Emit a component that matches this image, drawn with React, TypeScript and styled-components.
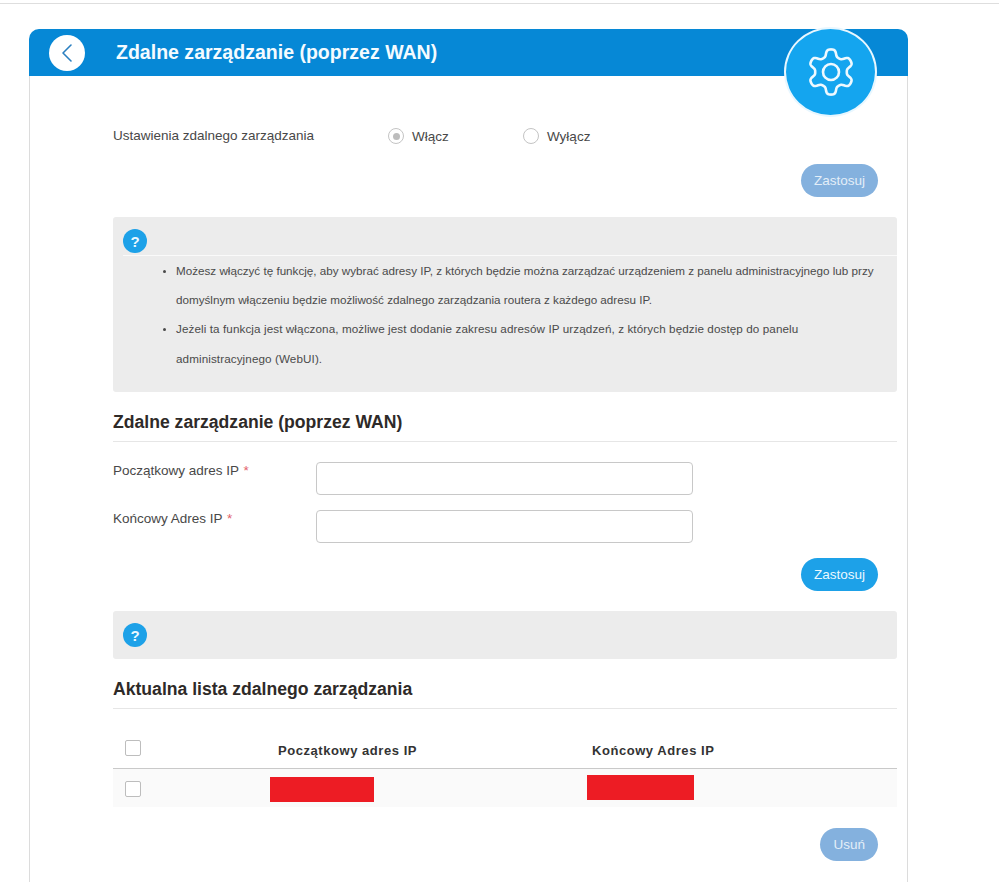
import React from "react";
import styled, { createGlobalStyle } from "styled-components";
import { ChevronLeft } from "lucide-react";

const GlobalStyle = createGlobalStyle`
  html, body {
    margin: 0;
    height: 882px;
    overflow: hidden;
    background: #fff;
    font-family: "Liberation Sans", Arial, sans-serif;
    color: #484848;
  }
`;

const TopLine = styled.div`
  height: 3px;
  border-bottom: 1px solid #dedede;
  margin-bottom: 25px;
`;

const Card = styled.div`
  position: relative;
  width: 879px;
  margin-left: 29px;
`;

const Header = styled.div`
  display: flex;
  align-items: center;
  height: 47px;
  padding-left: 20px;
  background: #0688d6;
  border-radius: 10px 10px 0 0;
`;

const BackButton = styled.div`
  display: flex;
  align-items: center;
  justify-content: center;
  width: 36px;
  height: 36px;
  margin-right: 31px;
  border-radius: 50%;
  background: #fff;
  color: #2a7fc0;
`;

const HeaderTitle = styled.h1`
  margin: 0;
  font-size: 19.55px;
  font-weight: 700;
  color: #f4fbff;
`;

const GearBadge = styled.div`
  position: absolute;
  top: -2px;
  right: 31px;
  display: flex;
  align-items: center;
  justify-content: center;
  width: 89px;
  height: 86px;
  border: 2px solid #e8f7ff;
  border-radius: 50%;
  background: #14a5ef;
  color: #eef9ff;
`;

const Body = styled.div`
  height: 810px;
  padding: 0 10px 0 83px;
  border-left: 1px solid #dcdcdc;
  border-right: 1px solid #dcdcdc;
`;

const ModeRow = styled.div`
  display: flex;
  align-items: center;
  height: 20px;
  padding-top: 50px;
  font-size: 13.5px;
`;

const ModeLabel = styled.span`
  width: 275px;
  margin-top: -2px;
`;

const RadioOption = styled.label`
  display: flex;
  align-items: center;
  gap: 8px;
  width: 135px;
  font-size: 13.5px;
`;

const Radio = styled.span<{ $checked?: boolean }>`
  display: flex;
  align-items: center;
  justify-content: center;
  width: 14px;
  height: 14px;
  border: 1px solid #c4c4c4;
  border-radius: 50%;
  background: #fff;

  &::after {
    content: "";
    display: ${(p) => (p.$checked ? "block" : "none")};
    width: 7px;
    height: 7px;
    border-radius: 50%;
    background: #bdbdbd;
  }
`;

const ButtonRow = styled.div<{ $top: number }>`
  display: flex;
  justify-content: flex-end;
  padding-top: ${(p) => p.$top}px;
  padding-right: 19px;
`;

const PillButton = styled.button<{ $disabled?: boolean }>`
  height: 33px;
  padding: 0 13px;
  border: none;
  border-radius: 17px;
  background: ${(p) => (p.$disabled ? "#84b1de" : "#1da1e8")};
  color: ${(p) => (p.$disabled ? "#e3eef8" : "#eaf8ff")};
  font-family: inherit;
  font-size: 13.5px;
`;

const InfoBox = styled.div<{ $top: number; $height: number }>`
  height: ${(p) => p.$height}px;
  margin-top: ${(p) => p.$top}px;
  padding: 12px 0 0 10px;
  box-sizing: border-box;
  background: #ececec;
  border-radius: 3px;
`;

const HelpIcon = styled.div`
  display: flex;
  align-items: center;
  justify-content: center;
  width: 24px;
  height: 24px;
  border-radius: 50%;
  background: #1da1e8;
  color: #eaf8ff;
  font-size: 15px;
  font-weight: 700;
`;

const InfoDivider = styled.div`
  height: 1px;
  margin: 2px 0 0 0;
  background: #fafafa;
`;

const InfoList = styled.ul`
  margin: -0.5px 0 0;
  padding: 0 20px 0 53px;
  font-size: 11.67px;
  line-height: 29.4px;
  color: #4a4a4a;

  li::marker {
    font-size: 10px;
  }
`;

const InfoItem = styled.li<{ $tracking?: number }>`
  letter-spacing: ${(p) => p.$tracking ?? 0}px;
`;

const SectionTitle = styled.h2<{ $top: number }>`
  margin: ${(p) => p.$top}px 0 0;
  padding-bottom: 9px;
  border-bottom: 1px solid #e6e6e6;
  font-size: 17.6px;
  line-height: 20px;
  font-weight: 700;
  color: #2e2a28;
`;

const FormRow = styled.div<{ $top: number }>`
  display: flex;
  margin-top: ${(p) => p.$top}px;
`;

const FieldLabel = styled.label`
  width: 203px;
  font-size: 13.5px;
  line-height: 18px;
`;

const Required = styled.span`
  margin-left: 1px;
  color: #e2606a;
`;

const TextInput = styled.input`
  width: 377px;
  height: 33px;
  box-sizing: border-box;
  border: 1px solid #c8c8c8;
  border-radius: 4px;
  background: #fff;
`;

const TableGrid = styled.div<{ $head?: boolean }>`
  display: grid;
  grid-template-columns: 157px 317px 1fr;
  height: ${(p) => (p.$head ? "59px" : "38px")};
  background: ${(p) => (p.$head ? "#fff" : "#fafafa")};
  border-bottom: ${(p) => (p.$head ? "1px solid #c9c9c9" : "none")};
`;

const CheckCell = styled.div<{ $top: number }>`
  padding: ${(p) => p.$top}px 0 0 12px;
`;

const CheckBox = styled.span`
  display: block;
  width: 14px;
  height: 14px;
  border: 1px solid #bdbdbd;
  border-radius: 2px;
  background: #fff;
`;

const HeadCell = styled.div<{ $left: number }>`
  padding: 34px 0 0 ${(p) => p.$left}px;
  font-size: 13px;
  font-weight: 700;
  letter-spacing: 0.55px;
  color: #333;
`;

const Redacted = styled.div<{ $width: number; $top: number }>`
  width: ${(p) => p.$width}px;
  height: 25px;
  margin-top: ${(p) => p.$top}px;
  background: #ed1c24;
`;

// six rounded lobes, one pointing straight up
const gearOutline = Array.from({ length: 180 }, (_, i) => {
  const angle = (i / 180) * Math.PI * 2;
  const lobe = Math.tanh(1.8 * Math.cos(6 * angle)) / Math.tanh(1.8);
  const r = 19.2 + 3.4 * lobe;
  const x = 24 + r * Math.sin(angle);
  const y = 24 - r * Math.cos(angle);
  return `${x.toFixed(2)},${y.toFixed(2)}`;
}).join(" ");

const GearIcon = () => (
  <svg width="48" height="48" viewBox="0 0 48 48" fill="none" stroke="currentColor" strokeWidth="2.6">
    <polygon points={gearOutline} strokeLinejoin="round" />
    <circle cx="24" cy="24" r="8" />
  </svg>
);

export default function App() {
  return (
    <>
      <GlobalStyle />
      <TopLine />
      <Card>
        <Header>
          <BackButton>
            <ChevronLeft size={32} strokeWidth={1.2} />
          </BackButton>
          <HeaderTitle>Zdalne zarządzanie (poprzez WAN)</HeaderTitle>
        </Header>
        <GearBadge>
          <GearIcon />
        </GearBadge>
        <Body>
          <ModeRow>
            <ModeLabel>Ustawienia zdalnego zarządzania</ModeLabel>
            <RadioOption>
              <Radio $checked />
              Włącz
            </RadioOption>
            <RadioOption>
              <Radio />
              Wyłącz
            </RadioOption>
          </ModeRow>
          <ButtonRow $top={18}>
            <PillButton $disabled>Zastosuj</PillButton>
          </ButtonRow>
          <InfoBox $top={20} $height={175}>
            <HelpIcon>?</HelpIcon>
            <InfoDivider />
            <InfoList>
              <InfoItem>
                Możesz włączyć tę funkcję, aby wybrać adresy IP, z których będzie można zarządzać urządzeniem z panelu
                administracyjnego lub przy domyślnym włączeniu będzie możliwość zdalnego zarządzania routera z każdego
                adresu IP.
              </InfoItem>
              <InfoItem $tracking={0.1}>
                Jeżeli ta funkcja jest włączona, możliwe jest dodanie zakresu adresów IP urządzeń, z których będzie
                dostęp do panelu administracyjnego (WebUI).
              </InfoItem>
            </InfoList>
          </InfoBox>
          <SectionTitle $top={20}>Zdalne zarządzanie (poprzez WAN)</SectionTitle>
          <FormRow $top={20}>
            <FieldLabel>
              Początkowy adres IP <Required>*</Required>
            </FieldLabel>
            <TextInput />
          </FormRow>
          <FormRow $top={15}>
            <FieldLabel>
              Końcowy Adres IP <Required>*</Required>
            </FieldLabel>
            <TextInput />
          </FormRow>
          <ButtonRow $top={15}>
            <PillButton>Zastosuj</PillButton>
          </ButtonRow>
          <InfoBox $top={20} $height={48}>
            <HelpIcon>?</HelpIcon>
          </InfoBox>
          <SectionTitle $top={20}>Aktualna lista zdalnego zarządzania</SectionTitle>
          <TableGrid $head>
            <CheckCell $top={31}>
              <CheckBox />
            </CheckCell>
            <HeadCell $left={8}>Początkowy adres IP</HeadCell>
            <HeadCell $left={5}>Końcowy Adres IP</HeadCell>
          </TableGrid>
          <TableGrid>
            <CheckCell $top={12}>
              <CheckBox />
            </CheckCell>
            <Redacted $width={104} $top={8} />
            <Redacted $width={107} $top={6} />
          </TableGrid>
          <ButtonRow $top={21}>
            <PillButton $disabled>Usuń</PillButton>
          </ButtonRow>
        </Body>
      </Card>
    </>
  );
}
